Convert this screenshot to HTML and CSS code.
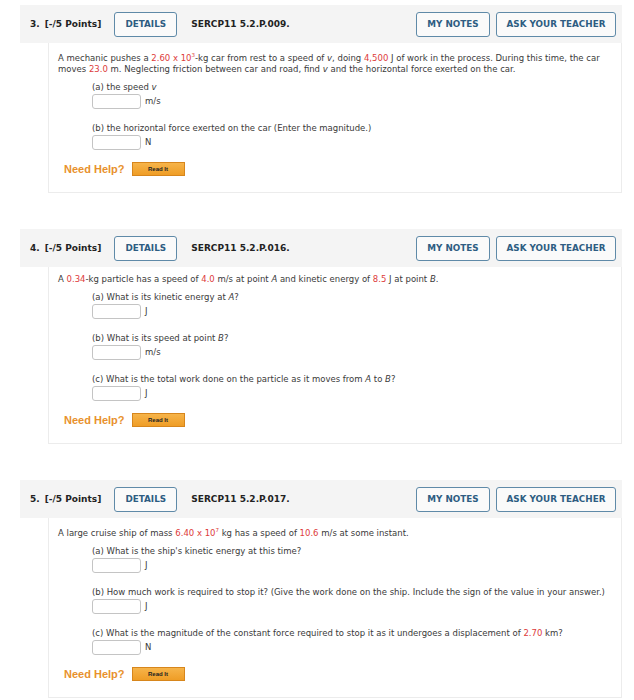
FILE: index.html
```html
<!DOCTYPE html>
<html>
<head>
<meta charset="utf-8">
<link rel="stylesheet" href="styles.css">
</head>
<body>
<div class="page">

  <section class="q">
    <div class="qhead">
      <span class="qnum">3.</span>
      <span class="qpts">[-/5 Points]</span>
      <span class="btn details">DETAILS</span>
      <span class="qcode">SERCP11 5.2.P.009.</span>
      <span class="spacer"></span>
      <span class="btn notes">MY NOTES</span>
      <span class="btn ask">ASK YOUR TEACHER</span>
    </div>
    <div class="qbody">
      <p class="stem">A mechanic pushes a <span class="r">2.60 x 10<sup>3</sup></span>-kg car from rest to a speed of <i>v</i>, doing <span class="r">4,500</span> J of work in the process. During this time, the car moves <span class="r">23.0</span> m. Neglecting friction between car and road, find <i>v</i> and the horizontal force exerted on the car.</p>
      <div class="part first">
        <div class="plabel">(a) the speed <i>v</i></div>
        <div class="ans"><span class="box"></span><span class="unit">m/s</span></div>
      </div>
      <div class="part">
        <div class="plabel">(b) the horizontal force exerted on the car (Enter the magnitude.)</div>
        <div class="ans"><span class="box"></span><span class="unit">N</span></div>
      </div>
      <div class="help"><span class="need">Need Help?</span><span class="read">Read It</span></div>
    </div>
  </section>

  <section class="q">
    <div class="qhead">
      <span class="qnum">4.</span>
      <span class="qpts">[-/5 Points]</span>
      <span class="btn details">DETAILS</span>
      <span class="qcode">SERCP11 5.2.P.016.</span>
      <span class="spacer"></span>
      <span class="btn notes">MY NOTES</span>
      <span class="btn ask">ASK YOUR TEACHER</span>
    </div>
    <div class="qbody">
      <p class="stem">A <span class="r">0.34</span>-kg particle has a speed of <span class="r">4.0</span> m/s at point <i>A</i> and kinetic energy of <span class="r">8.5</span> J at point <i>B</i>.</p>
      <div class="part first">
        <div class="plabel">(a) What is its kinetic energy at <i>A</i>?</div>
        <div class="ans"><span class="box"></span><span class="unit">J</span></div>
      </div>
      <div class="part">
        <div class="plabel">(b) What is its speed at point <i>B</i>?</div>
        <div class="ans"><span class="box"></span><span class="unit">m/s</span></div>
      </div>
      <div class="part">
        <div class="plabel">(c) What is the total work done on the particle as it moves from <i>A</i> to <i>B</i>?</div>
        <div class="ans"><span class="box"></span><span class="unit">J</span></div>
      </div>
      <div class="help"><span class="need">Need Help?</span><span class="read">Read It</span></div>
    </div>
  </section>

  <section class="q">
    <div class="qhead">
      <span class="qnum">5.</span>
      <span class="qpts">[-/5 Points]</span>
      <span class="btn details">DETAILS</span>
      <span class="qcode">SERCP11 5.2.P.017.</span>
      <span class="spacer"></span>
      <span class="btn notes">MY NOTES</span>
      <span class="btn ask">ASK YOUR TEACHER</span>
    </div>
    <div class="qbody">
      <p class="stem">A large cruise ship of mass <span class="r">6.40 x 10<sup>7</sup></span> kg has a speed of <span class="r">10.6</span> m/s at some instant.</p>
      <div class="part first">
        <div class="plabel">(a) What is the ship's kinetic energy at this time?</div>
        <div class="ans"><span class="box"></span><span class="unit">J</span></div>
      </div>
      <div class="part">
        <div class="plabel">(b) How much work is required to stop it? (Give the work done on the ship. Include the sign of the value in your answer.)</div>
        <div class="ans"><span class="box"></span><span class="unit">J</span></div>
      </div>
      <div class="part">
        <div class="plabel">(c) What is the magnitude of the constant force required to stop it as it undergoes a displacement of <span class="r">2.70</span> km?</div>
        <div class="ans"><span class="box"></span><span class="unit">N</span></div>
      </div>
      <div class="help"><span class="need">Need Help?</span><span class="read">Read It</span></div>
    </div>
  </section>

</div>
</body>
</html>
```

FILE: styles.css
```css
html, body {
  margin: 0;
  padding: 0;
  background: #ffffff;
}

.page {
  padding: 5px 12px 0 20px;
  font-family: "DejaVu Sans", Verdana, sans-serif;
  color: #3a3a3a;
}

.q {
  width: 602px;
}

.q + .q {
  margin-top: 36px;
}

.qhead {
  display: flex;
  align-items: center;
  height: 38px;
  background: #f4f4f4;
  padding: 0 6px 0 10px;
  font-size: 9px;
  font-weight: bold;
  color: #222222;
}

.qnum {
  margin-right: 5px;
}

.qpts {
  margin-right: 13px;
}

.btn {
  display: flex;
  align-items: center;
  justify-content: center;
  height: 25px;
  border: 1px solid #5f8aa8;
  border-radius: 3px;
  background: #fafafa;
  color: #2e5d82;
  box-sizing: border-box;
  font-size: 8.8px;
}

.details {
  width: 63px;
  margin-right: 14px;
}

.notes {
  width: 74px;
  margin-right: 6px;
}

.ask {
  width: 120px;
}

.spacer {
  flex: 1;
}

.qbody {
  margin-left: 28px;
  border: 1px solid #ececec;
  border-top: none;
  padding: 7px 0 16px 9px;
  font-size: 8.5px;
  line-height: 11px;
}

.stem {
  margin: 0;
  padding-right: 8px;
}

.r {
  color: #dd3b3b;
}

sup {
  font-size: 5.5px;
  vertical-align: 4px;
  line-height: 10px;
}

.part {
  margin-left: 34px;
  margin-top: 14px;
}

.part.first {
  margin-top: 7px;
}

.plabel {
  height: 11px;
}

.ans {
  display: flex;
  align-items: center;
  margin-top: 1px;
}

.box {
  display: block;
  width: 49px;
  height: 15px;
  border: 1px solid #c4c4c4;
  border-radius: 3px;
  box-sizing: border-box;
  background: #ffffff;
}

.unit {
  margin-left: 4px;
}

.help {
  display: flex;
  align-items: center;
  margin-top: 12px;
  margin-left: 6px;
}

.need {
  font-family: "Liberation Sans", Arial, sans-serif;
  font-weight: bold;
  font-size: 11px;
  line-height: 14px;
  color: #e8912d;
  margin-right: 7px;
}

.read {
  display: flex;
  align-items: center;
  justify-content: center;
  width: 53px;
  height: 14px;
  box-sizing: border-box;
  border: 1px solid #d7861c;
  background: linear-gradient(#f6b44a, #ef9d26);
  font-family: "Liberation Sans", Arial, sans-serif;
  font-weight: bold;
  font-size: 6px;
  color: #222222;
}
```
